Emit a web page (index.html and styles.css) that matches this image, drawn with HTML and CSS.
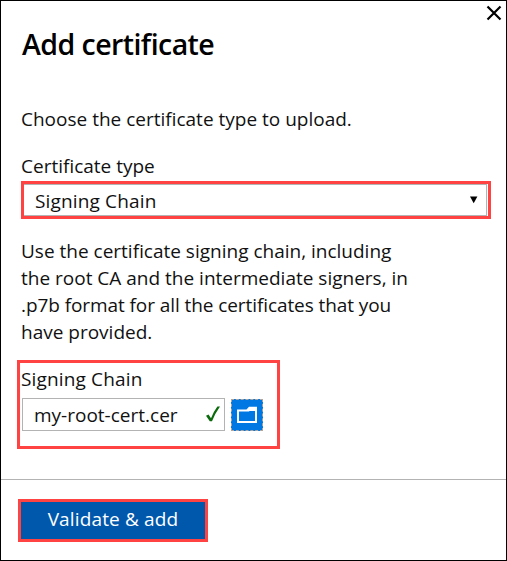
FILE: index.html
```html
<!DOCTYPE html>
<html lang="en">
<head>
<meta charset="utf-8">
<title>Add certificate</title>
<link rel="stylesheet" href="styles.css">
</head>
<body>
<main class="dialog">
  <header class="header">
    <h1 class="title">Add certificate</h1>
    <button class="close" aria-label="Close"><svg width="16" height="16" viewBox="0 0 16 16"><path d="M1.5 1.5 14.5 14.5M14.5 1.5 1.5 14.5"/></svg></button>
  </header>
  <section class="content">
    <p class="intro">Choose the certificate type to upload.</p>
    <div class="label type-label"><span>Certificate type</span></div>
    <div class="highlight type-highlight">
      <div class="select"><span class="select-text">Signing Chain</span><svg class="arrow" width="8" height="8" viewBox="0 0 8 8"><path d="M0 0.5H7.4L3.7 7.2Z"/></svg></div>
    </div>
    <p class="help"><span>Use the certificate signing chain, including</span><br><span>the root CA and the intermediate signers, in</span><br><span class="format-line">.p7b format for all the certificates that you</span><br><span>have provided.</span></p>
    <div class="highlight upload">
      <div class="label chain-label"><span>Signing Chain</span></div>
      <div class="row">
        <div class="file"><span class="file-name">my-root-cert.cer</span><svg width="14" height="16" viewBox="0 0 14 16"><path d="M0 9.800 2.500 8.600 5 12.300Q8 5 11.400.6L14 .4Q9.200 7 6 15.300H3.800Z"/></svg></div>
        <button class="browse" aria-label="Browse"><svg width="20" height="18" viewBox="0 0 20 18"><path fill-rule="evenodd" d="M0 3.500H9.500L12 .8H20V17H0ZM2 5.500V15H18V5H12.500L12 5.500Z"/></svg></button>
      </div>
    </div>
  </section>
  <footer class="footer">
    <button class="highlight submit"><span>Validate &amp; add</span></button>
  </footer>
</main>
</body>
</html>
```
FILE: styles.css
```css
* { box-sizing: border-box; }
body {
  margin: 0;
  font-family: "Open Sans", "Noto Sans", sans-serif;
  font-size: 19px;
  line-height: 27px;
  color: #111;
  background: #fff;
}
p, h1 { margin: 0; }
button { font: inherit; padding: 0; border: 0; background: none; }
svg { display: block; flex: none; }
span { white-space: nowrap; }
.dialog {
  width: 507px;
  height: 561px;
  border: 1px solid #000;
  display: flex;
  flex-direction: column;
}
.header {
  height: 105px;
  display: flex;
  justify-content: space-between;
  align-items: flex-start;
  padding: 4px 4px 0 21px;
}
.title {
  font-size: 28.5px;
  font-weight: 600;
  line-height: 40px;
  margin-top: 19px;
  color: #000;
  letter-spacing: -0.55px;
}
.close { width: 16px; height: 16px; }
.close path { fill: none; stroke: #000; stroke-width: 2.2; }
.content { height: 373px; padding-left: 20px; }
.intro { height: 47px; }
.label { height: 27px; }
.type-label { margin-bottom: 1px; }
.chain-label, .select-text { letter-spacing: 0.15px; }
.highlight { border: 3px solid #ff4343; }
.type-highlight { width: 470px; height: 38px; padding-right: 1px; }
.select {
  height: 32px;
  border: 1px solid #b3b3b3;
  border-left: 0;
  display: flex;
  align-items: center;
  justify-content: space-between;
  padding: 2px 8px 0 11px;
}
.arrow { fill: #000; margin-top: -2px; }
.help { margin-top: 19px; height: 108px; }
.format-line { letter-spacing: -0.08px; }
.upload {
  width: 263px;
  height: 89px;
  margin: 14px 0 0 -4px;
  padding: 3px 0 0 1px;
}
.row { display: flex; gap: 6px; padding: 5px 0 0 1px; }
.file {
  width: 203px;
  height: 33px;
  border: 1px solid #b3b3b3;
  display: flex;
  align-items: center;
  justify-content: space-between;
  padding: 2px 4px 0 11px;
}
.file svg { fill: #0b6a0b; margin-top: -3px; }
.browse {
  width: 32px;
  height: 32px;
  margin-top: 1px;
  display: flex;
  align-items: center;
  justify-content: center;
  background: #0078e4;
  border: 1px dashed #b0a69d;
}
.browse svg { fill: #fff; }
.footer { flex: 1; border-top: 1px solid #b3b3b3; padding: 19px 0 0 17px; }
.submit {
  display: block;
  width: 190px;
  height: 43px;
  background: #0058ad;
  color: #fff;
  line-height: 32px;
  padding-bottom: 4px;
  letter-spacing: 0.15px;
}
```
